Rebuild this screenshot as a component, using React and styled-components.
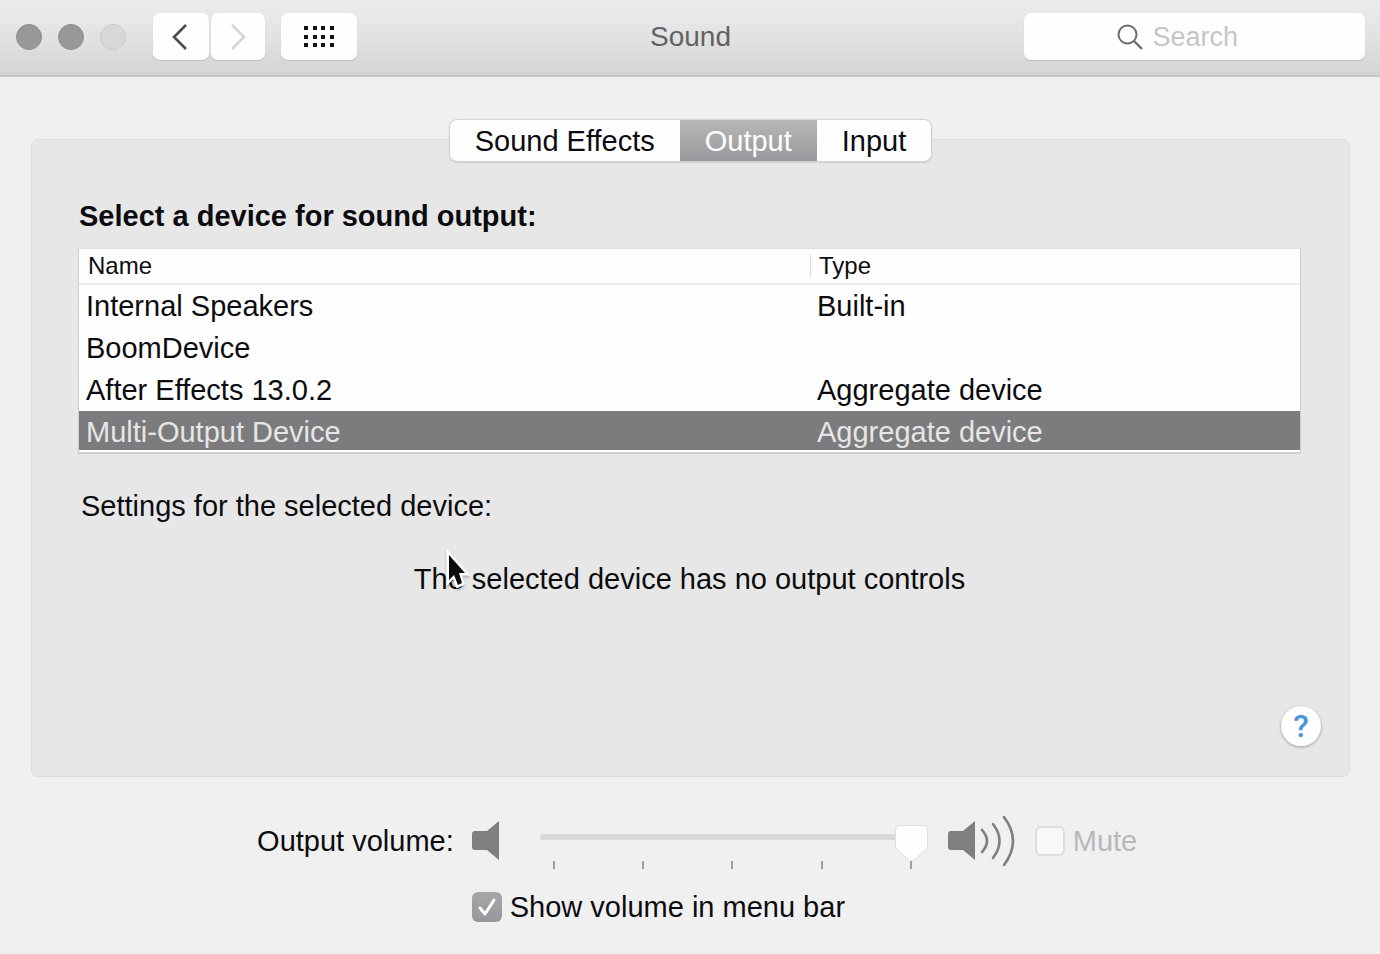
import React, { useState } from 'react';
import styled, { createGlobalStyle } from 'styled-components';

const devices = [
  { name: 'Internal Speakers', type: 'Built-in' },
  { name: 'BoomDevice', type: '' },
  { name: 'After Effects 13.0.2', type: 'Aggregate device' },
  { name: 'Multi-Output Device', type: 'Aggregate device' },
];

const tabs = ['Sound Effects', 'Output', 'Input'];

const SpeakerBody = () => (
  <path d="M3 15 H15 L27 5 V44 L15 34 H3 Q0 34 0 31 V18 Q0 15 3 15 Z" fill="#7f7f80" />
);

const App = () => {
  const [selected, setSelected] = useState(3);
  const [activeTab, setActiveTab] = useState('Output');
  const [showVolume, setShowVolume] = useState(true);

  return (
    <Window>
      <GlobalStyle />
      <Toolbar>
        <ToolbarLeft>
          <Lights>
            <Light aria-label="Close" />
            <Light aria-label="Minimize" />
            <Light aria-label="Zoom" disabled />
          </Lights>
          <NavButtons>
            <ToolButton $width={56} aria-label="Back">
              <svg width="18" height="26" viewBox="0 0 18 26" fill="none" stroke="#4c4c4e" strokeWidth="2.6">
                <path d="M14 1 L2 13 L14 25" />
              </svg>
            </ToolButton>
            <ToolButton $width={54} aria-label="Forward" disabled>
              <svg width="16" height="26" viewBox="0 0 16 26" fill="none" stroke="#d6d6d6" strokeWidth="2.6">
                <path d="M2 1 L14 13 L2 25" />
              </svg>
            </ToolButton>
          </NavButtons>
          <ToolButton $width={76} aria-label="Show all">
            <svg width="30" height="22" viewBox="0 0 30 22">
              {[0, 9, 17].map((y) =>
                [0, 9, 17, 26].map((x) => <rect key={`${x}-${y}`} x={x} y={y} width="4" height="4" fill="#111" />)
              )}
            </svg>
          </ToolButton>
        </ToolbarLeft>
        <Title>Sound</Title>
        <SearchField>
          <svg width="26" height="26" viewBox="0 0 26 26" fill="none" stroke="#6b6b6d" strokeWidth="2">
            <circle cx="10.5" cy="10.5" r="9" />
            <path d="M17 17 L25 25" strokeWidth="2.4" />
          </svg>
          <SearchInput type="text" placeholder="Search" aria-label="Search" />
        </SearchField>
      </Toolbar>

      <Main>
        <Tabs role="tablist">
          {tabs.map((tab) => (
            <Tab key={tab} role="tab" aria-selected={tab === activeTab} $active={tab === activeTab} onClick={() => setActiveTab(tab)}>
              {tab}
            </Tab>
          ))}
        </Tabs>

        <Panel>
          <PanelContent>
            <Heading>Select a device for sound output:</Heading>
            <DeviceTable>
              <thead>
                <tr>
                  <HeadCell><HeadLabel>Name</HeadLabel></HeadCell>
                  <HeadCell $width="490px"><HeadLabel $divider>Type</HeadLabel></HeadCell>
                </tr>
              </thead>
              <tbody>
                {devices.map((device, i) => (
                  <DeviceRow key={device.name} $selected={i === selected} onClick={() => setSelected(i)}>
                    <td>{device.name}</td>
                    <td>{device.type}</td>
                  </DeviceRow>
                ))}
              </tbody>
            </DeviceTable>
            <Settings>Settings for the selected device:</Settings>
            <Message>
              The selected device has no output controls
              <Cursor width="26" height="44" viewBox="0 0 26 44">
                <path
                  d="M4 7 V32 L9 27 L13 37 L17 35 L14 25 H20 Z"
                  fill="#0c0c0c"
                  stroke="#fff"
                  strokeWidth="5"
                  paintOrder="stroke"
                />
              </Cursor>
            </Message>
          </PanelContent>
          <HelpButton aria-label="Help">?</HelpButton>
        </Panel>

        <VolumeArea>
          <VolumeLabel htmlFor="volume">Output volume:</VolumeLabel>
          <VolumeControls>
            <svg width="48" height="50" viewBox="0 0 48 50">
              <SpeakerBody />
            </svg>
            <SliderBox>
              <Slider id="volume" type="range" min="0" max="4" defaultValue="4" disabled />
              <Ticks>
                {[0, 1, 2, 3, 4].map((n) => <Tick key={n} />)}
              </Ticks>
            </SliderBox>
            <svg width="67" height="50" viewBox="0 0 67 50">
              <SpeakerBody />
              <g fill="none" stroke="#7f7f80" strokeWidth="2.6" strokeLinecap="round">
                <path d="M34 14 Q44 25 34 36" />
                <path d="M45 8 Q58 25 45 42" />
                <path d="M56 1 Q74 25 56 49" />
              </g>
            </svg>
            <CheckLabel $disabled>
              <Checkbox type="checkbox" disabled />
              Mute
            </CheckLabel>
          </VolumeControls>
          <MenuBarOption>
            <Checkbox type="checkbox" checked={showVolume} onChange={() => setShowVolume(!showVolume)} />
            Show volume in menu bar
          </MenuBarOption>
        </VolumeArea>
      </Main>
    </Window>
  );
};

const GlobalStyle = createGlobalStyle`
  * {
    box-sizing: border-box;
  }

  body {
    margin: 0;
    background: #f0f0f0;
  }

  body, button, input {
    font-family: 'Liberation Sans', Arial, sans-serif;
    font-size: 29px;
    line-height: 32px;
    color: #0c0c10;
  }

  svg {
    flex-shrink: 0;
  }
`;

const Window = styled.div`
  min-height: 100vh;
  background: #f0f0f0;
`;

const Toolbar = styled.header`
  display: grid;
  grid-template-columns: 1fr auto 1fr;
  align-items: center;
  height: 77px;
  padding: 0 15px 2px 16px;
  background: linear-gradient(#ececee, #e3e2e3 50%, #d4d4d4);
  border-bottom: 2px solid #c6c6c6;
`;

const ToolbarLeft = styled.div`
  display: flex;
  align-items: center;
  gap: 16px;
`;

const Lights = styled.div`
  display: flex;
  gap: 16px;
  margin-right: 11px;
`;

const Light = styled.button`
  width: 26px;
  height: 26px;
  padding: 0;
  border: 1px solid #8c8c8e;
  border-radius: 50%;
  background: #98989a;

  &:disabled {
    border-color: #c8c8c8;
    background: #d8d8d8;
  }
`;

const NavButtons = styled.div`
  display: flex;
  gap: 2px;
`;

const ToolButton = styled.button`
  display: flex;
  align-items: center;
  justify-content: center;
  width: ${(props) => props.$width}px;
  height: 47px;
  padding: 0;
  border: none;
  border-radius: 7px;
  background: #fefefe;
  box-shadow: 0 1px 1px #bebebe;
`;

const Title = styled.h1`
  margin: 0;
  font-size: 28px;
  font-weight: normal;
  color: #616163;
`;

const SearchField = styled.label`
  display: flex;
  align-items: center;
  justify-content: center;
  justify-self: end;
  gap: 10px;
  width: 341px;
  height: 47px;
  border-radius: 7px;
  background: #fefefe;
  box-shadow: 0 1px 1px #bebebe;
`;

const SearchInput = styled.input`
  width: 120px;
  padding: 0;
  border: none;
  outline: none;
  background: transparent;
  font-size: 27px;

  &::placeholder {
    color: #c6c6c6;
    opacity: 1;
  }
`;

const Main = styled.main`
  display: flex;
  flex-direction: column;
  padding: 43px 30px 30px 31px;
`;

const Tabs = styled.div`
  display: flex;
  align-self: center;
  z-index: 1;
  height: 41px;
  margin-bottom: -22px;
  overflow: hidden;
  border-radius: 7px;
  background: #fefefe;
  box-shadow: 0 0 1px 1px #d2d2d2, 0 1px 2px #a8a8a8;
`;

const Tab = styled.button`
  padding: 0 25px;
  border: none;
  background: ${(props) => (props.$active ? 'linear-gradient(#b8b8ba, #98989c)' : 'transparent')};
  color: ${(props) => (props.$active ? '#fefefe' : '#0c0c10')};
`;

const Panel = styled.section`
  display: flex;
  flex-direction: column;
  padding: 60px 28px 30px;
  border: 1px solid #dedede;
  border-radius: 7px;
  background: #e7e7e7;
`;

const PanelContent = styled.div`
  padding: 0 20px 0 18px;
`;

const Heading = styled.h2`
  margin: 0 0 16px 1px;
  font-size: 29px;
  font-weight: bold;
`;

const DeviceTable = styled.table`
  width: 100%;
  table-layout: fixed;
  border: 1px solid #cfcfcf;
  border-top-color: #dedede;
  border-bottom-width: 2px;
  border-spacing: 0;
  background: #fefefe;
`;

const HeadCell = styled.th`
  width: ${(props) => props.$width || 'auto'};
  height: 36px;
  padding: 0;
  border-bottom: 2px solid #ececec;
  font-size: 24px;
  font-weight: normal;
  line-height: 24px;
  text-align: left;
`;

const HeadLabel = styled.div`
  padding-left: 8px;
  border-left: 1px solid ${(props) => (props.$divider ? '#dedede' : 'transparent')};
`;

const DeviceRow = styled.tr`
  td {
    height: 42px;
    padding: 0 7px;
    ${(props) => props.$selected && 'height: 41px; padding-top: 3px; background: #7c7c7e; border-bottom: 2px solid #fefefe;'}
    color: ${(props) => (props.$selected ? '#e6e6e6' : '#0c0c10')};
  }
`;

const Settings = styled.p`
  margin: 36px 0 0 3px;
`;

const Message = styled.p`
  position: relative;
  width: fit-content;
  margin: 41px auto 0;
`;

/* pointer resting over the text */
const Cursor = styled.svg`
  position: absolute;
  left: 31px;
  top: -15px;
  filter: drop-shadow(0 2px 1px rgba(0, 0, 0, 0.25));
`;

const HelpButton = styled.button`
  align-self: flex-end;
  width: 40px;
  height: 40px;
  margin-top: 111px;
  padding: 0;
  border: none;
  border-radius: 50%;
  background: #fefefe;
  box-shadow: 0 1px 2px 1px #bcbcbc;
  color: #4a94dc;
  font-family: Roboto, sans-serif;
  font-size: 32px;
  font-weight: 500;
`;

const VolumeArea = styled.div`
  display: grid;
  grid-template-columns: 198px auto;
  justify-content: center;
  align-items: center;
  column-gap: 18px;
  row-gap: 25px;
  margin-top: 39px;
  padding-left: 12px;
`;

const VolumeLabel = styled.label`
  text-align: right;
  white-space: nowrap;
`;

const VolumeControls = styled.div`
  display: flex;
  align-items: center;
  gap: 20px;
`;

const SliderBox = styled.div`
  display: flex;
  flex-direction: column;
  width: 388px;
  height: 50px;
  padding-top: 9px;
`;

const thumb = encodeURIComponent(
  '<svg xmlns="http://www.w3.org/2000/svg" width="33" height="37"><path d="M6 .5H27Q32.500 .5 32.500 6V21Q32.500 23 31 24.500L18.500 35.500Q16.500 37 14.500 35.500L2 24.500Q.5 23 .5 21V6Q.5 .5 6 .5Z" fill="#fefefe" stroke="#dedede"/></svg>'
);

const Slider = styled.input`
  appearance: none;
  flex-shrink: 0;
  width: 100%;
  height: 37px;
  margin: 0;
  background: transparent;

  &::-webkit-slider-runnable-track {
    height: 6px;
    margin-bottom: 13px;
    border-radius: 3px;
    background: #d8d8d8;
  }

  &::-webkit-slider-thumb {
    appearance: none;
    width: 33px;
    height: 37px;
    margin-top: -9px;
    border: none;
    background: url("data:image/svg+xml,${thumb}") no-repeat;
  }
`;

const Ticks = styled.div`
  display: flex;
  justify-content: space-between;
  margin-top: -1px;
  padding: 0 16px 0 13px;
`;

const Tick = styled.span`
  width: 2px;
  height: 8px;
  background: #a0a0a0;
`;

const CheckLabel = styled.label`
  display: flex;
  align-items: center;
  gap: 8px;
  color: ${(props) => (props.$disabled ? '#b8b8ba' : '#0c0c10')};
`;

const MenuBarOption = styled(CheckLabel)`
  grid-column: 2;
`;

const check = encodeURIComponent(
  '<svg xmlns="http://www.w3.org/2000/svg" width="30" height="30" fill="none" stroke="#fff" stroke-width="3" stroke-linecap="round" stroke-linejoin="round"><path d="M8 16L13 22L22 8"/></svg>'
);

const Checkbox = styled.input`
  appearance: none;
  width: 30px;
  height: 30px;
  margin: 0;
  border: 2px solid #dedede;
  border-radius: 6px;
  background: #f8f8f8;

  &:checked {
    border: none;
    background: url("data:image/svg+xml,${check}") no-repeat, linear-gradient(#a6a6a8, #98989c);
  }
`;

export default App;
